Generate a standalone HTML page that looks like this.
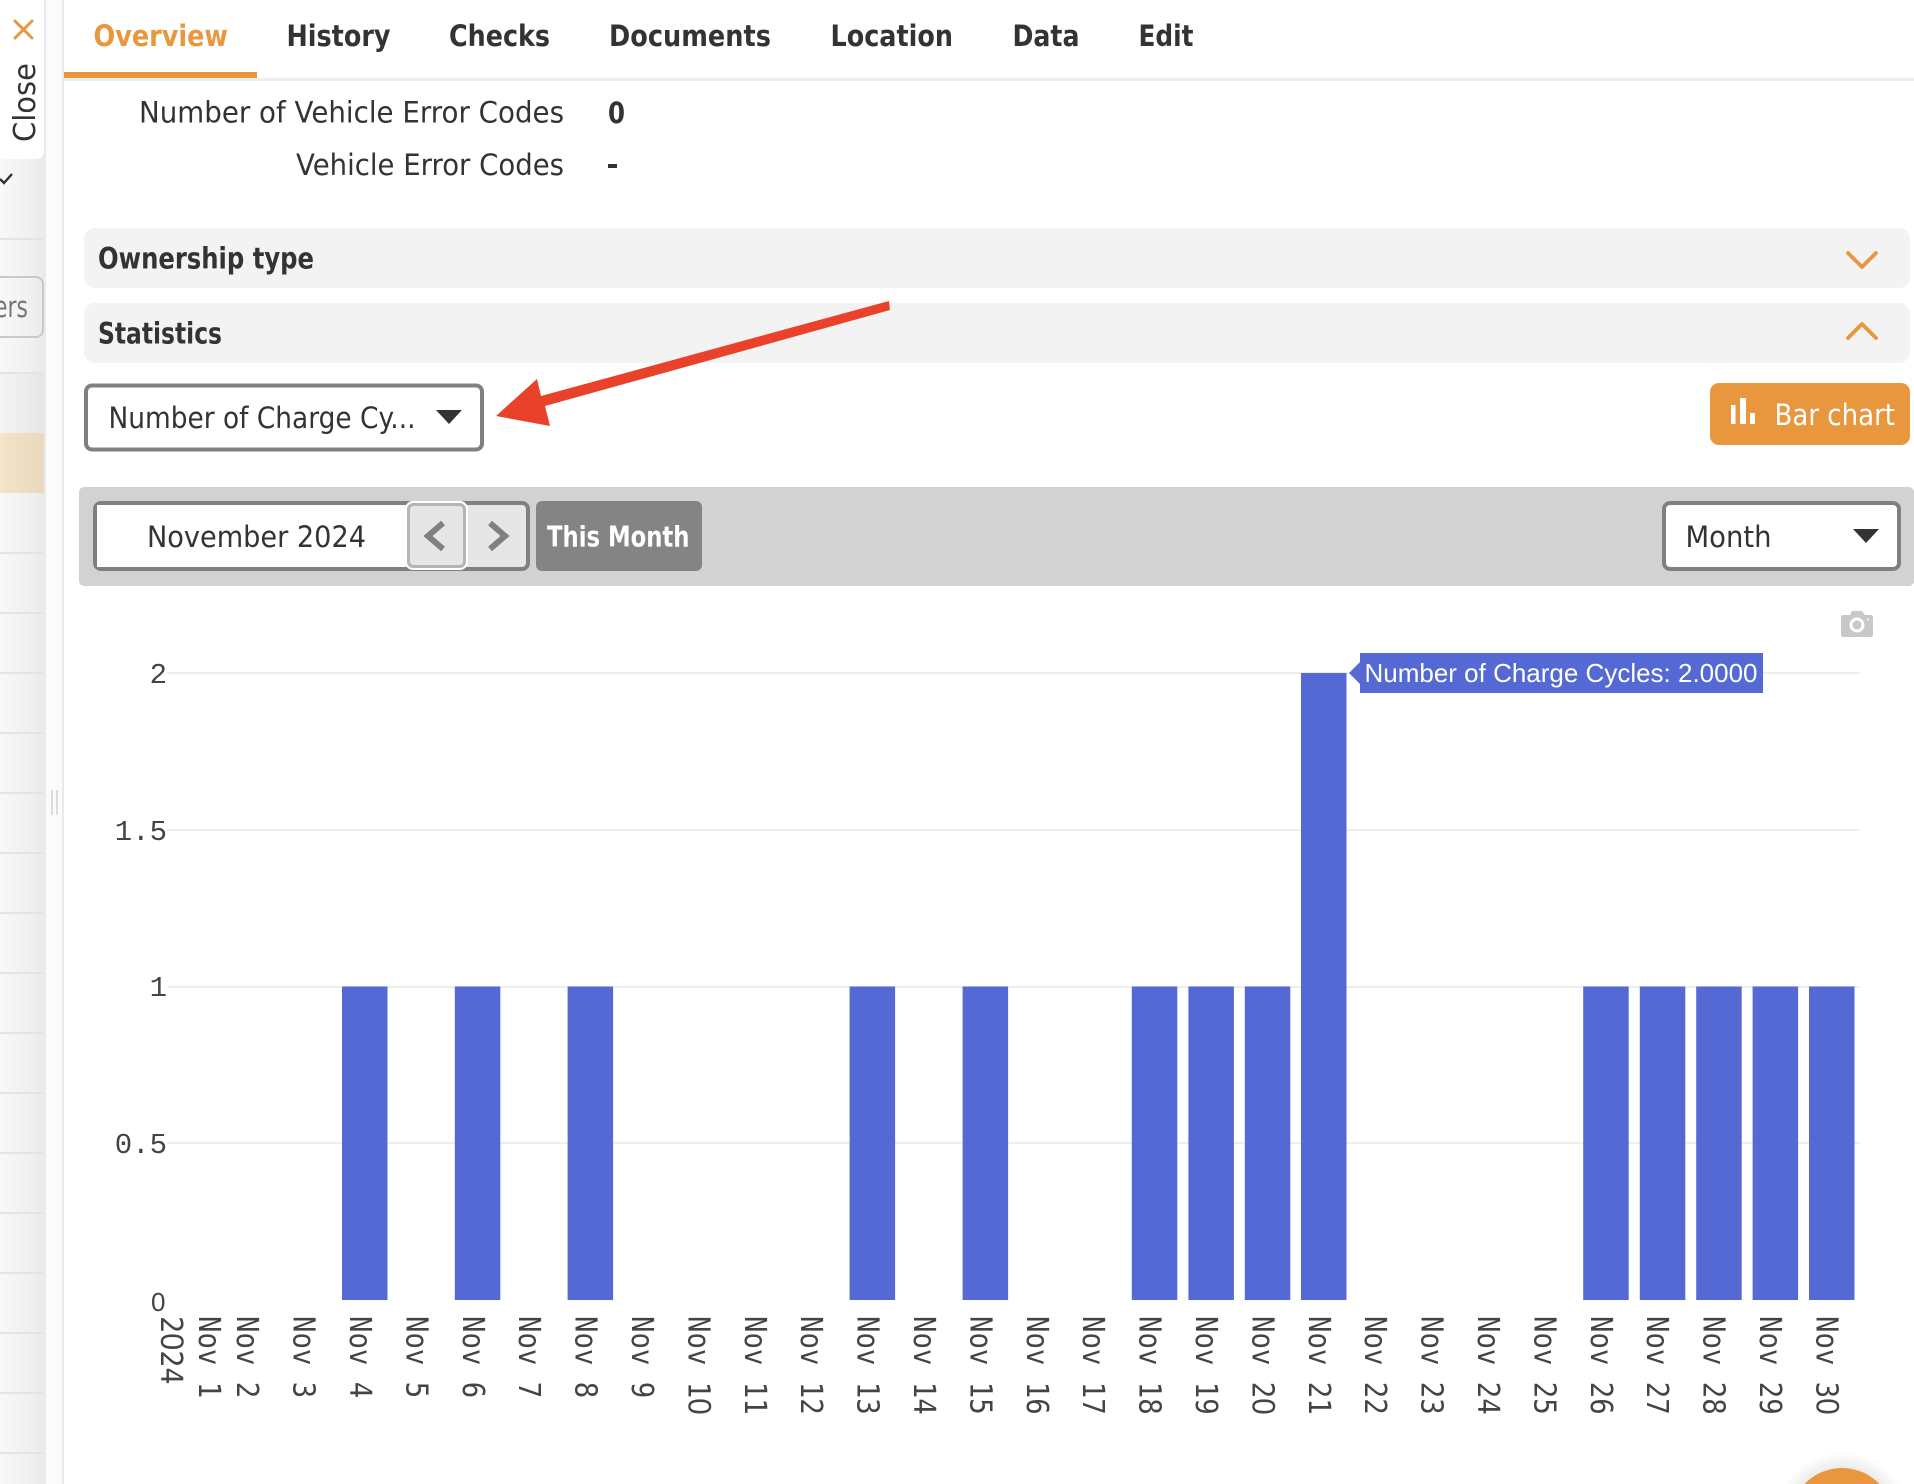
<!DOCTYPE html>
<html><head><meta charset="utf-8"><style>
html,body{margin:0;padding:0;background:#fff;width:1914px;height:1484px;overflow:hidden}
svg{display:block}
.r{font-family:"DejaVu Sans",sans-serif;font-size:29.5px;fill:#333}
.b{font-family:"DejaVu Sans",sans-serif;font-size:29.5px;font-weight:700;fill:#333}
.m{font-family:"DejaVu Sans Mono",monospace;font-size:26.4px;fill:#444}
.m tspan{font-family:"Liberation Sans",sans-serif;font-size:28.5px}
.y{font-family:"Liberation Mono",monospace;font-size:29px;fill:#444}
.s{font-family:"Liberation Sans",sans-serif}
</style></head><body>
<svg width="1914" height="1484" viewBox="0 0 1914 1484" xmlns="http://www.w3.org/2000/svg">
<defs><linearGradient id="sb" x1="0" x2="1" y1="0" y2="0"><stop offset="0" stop-color="#f8f8f8"/><stop offset="0.6" stop-color="#f1f1f1"/><stop offset="1" stop-color="#e9e9e9"/></linearGradient>
<linearGradient id="hl" x1="0" x2="1" y1="0" y2="0"><stop offset="0" stop-color="#f3e4ca"/><stop offset="1" stop-color="#e8d9bd"/></linearGradient>
<linearGradient id="bd" x1="0" x2="1" y1="0" y2="0"><stop offset="0" stop-color="#f4f4f4"/><stop offset="1" stop-color="#e6e6e6"/></linearGradient>
<radialGradient id="sh" gradientUnits="userSpaceOnUse" cx="1842" cy="1520" r="68"><stop offset="0.76" stop-color="#000" stop-opacity="0.08"/><stop offset="1" stop-color="#000" stop-opacity="0"/></radialGradient></defs>

<!-- sidebar -->
<rect x="0" y="0" width="46" height="1484" fill="url(#sb)"/>
<rect x="46" y="0" width="16" height="1484" fill="#fbfbfb"/>
<rect x="62" y="0" width="2" height="1484" fill="#e9e9e9"/>
<g fill="#e4e4e4">
<rect y="238" width="44" height="2"/><rect y="372" width="44" height="2"/><rect y="552" width="44" height="2"/><rect y="612" width="44" height="2"/><rect y="672" width="44" height="2"/><rect y="732" width="44" height="2"/><rect y="792" width="44" height="2"/><rect y="852" width="44" height="2"/><rect y="912" width="44" height="2"/><rect y="972" width="44" height="2"/><rect y="1032" width="44" height="2"/><rect y="1092" width="44" height="2"/><rect y="1152" width="44" height="2"/><rect y="1212" width="44" height="2"/><rect y="1272" width="44" height="2"/><rect y="1332" width="44" height="2"/><rect y="1392" width="44" height="2"/><rect y="1452" width="44" height="2"/>
</g>
<rect x="0" y="374" width="44" height="59" fill="url(#bd)"/>
<rect x="0" y="433" width="44" height="60" fill="url(#hl)"/>
<path d="M0 0H44V151a8 8 0 0 1-8 8H0Z" fill="#fff"/>
<path d="M15 21L32 38M32 21L15 38" stroke="#e8973f" stroke-width="3" stroke-linecap="round" fill="none"/>
<text class="r" style="font-size:30px" transform="translate(35,142) rotate(-90)" textLength="79" lengthAdjust="spacingAndGlyphs">Close</text>
<path d="M0 179L4 183L12 174" stroke="#333" stroke-width="2.400" fill="none"/>
<path d="M0 277H36a7 7 0 0 1 7 7V330a7 7 0 0 1-7 7H0" stroke="#c9c9c9" stroke-width="2" fill="none"/>
<text class="r" x="-6" y="317" style="fill:#777" textLength="34" lengthAdjust="spacingAndGlyphs">ers</text>
<path d="M52 790V815M57 790V815" stroke="#dcdcdc" stroke-width="2"/>

<!-- tabs -->
<text class="b" x="93.500" y="46" style="fill:#e8973f" textLength="134.500" lengthAdjust="spacingAndGlyphs">Overview</text>
<text class="b" x="286.500" y="46" textLength="104" lengthAdjust="spacingAndGlyphs">History</text>
<text class="b" x="449" y="46" textLength="101" lengthAdjust="spacingAndGlyphs">Checks</text>
<text class="b" x="609" y="46" textLength="162" lengthAdjust="spacingAndGlyphs">Documents</text>
<text class="b" x="830.500" y="46" textLength="122.500" lengthAdjust="spacingAndGlyphs">Location</text>
<text class="b" x="1012.500" y="46" textLength="67" lengthAdjust="spacingAndGlyphs">Data</text>
<text class="b" x="1138.500" y="46" textLength="55" lengthAdjust="spacingAndGlyphs">Edit</text>
<rect x="64" y="78" width="1850" height="3" fill="#eee"/>
<rect x="64" y="72" width="193" height="6" fill="#e8973f"/>

<!-- rows -->
<text class="r" x="139" y="122.500" textLength="425" lengthAdjust="spacingAndGlyphs">Number of Vehicle Error Codes</text>
<text class="r" x="296" y="175" textLength="268" lengthAdjust="spacingAndGlyphs">Vehicle Error Codes</text>
<text class="b" x="608" y="123" textLength="17" lengthAdjust="spacingAndGlyphs">0</text>
<rect x="608" y="164" width="9" height="4" fill="#333"/>

<!-- accordions -->
<rect x="84" y="228" width="1826" height="60" rx="11" fill="#f3f3f3"/>
<rect x="84" y="303" width="1826" height="60" rx="11" fill="#f3f3f3"/>
<text class="b" x="98" y="268.500" textLength="216" lengthAdjust="spacingAndGlyphs">Ownership type</text>
<text class="b" x="98" y="343.500" textLength="124" lengthAdjust="spacingAndGlyphs">Statistics</text>
<path d="M1848 253L1862 267L1876 253" stroke="#e8973f" stroke-width="3.800" stroke-linecap="round" stroke-linejoin="round" fill="none"/>
<path d="M1848 338L1862 324L1876 338" stroke="#e8973f" stroke-width="3.800" stroke-linecap="round" stroke-linejoin="round" fill="none"/>

<!-- select 1 -->
<rect x="86" y="385.500" width="396" height="64" rx="6" fill="#fff" stroke="#808080" stroke-width="4"/>
<text class="r" x="108.500" y="428" textLength="307" lengthAdjust="spacingAndGlyphs">Number of Charge Cy...</text>
<path d="M436 410H462L449 424Z" fill="#333"/>

<!-- arrow -->
<path d="M889 301L541 396L537 379L496 416L550 426L545 406L890 310Z" fill="#e9412a"/>

<!-- bar chart btn -->
<rect x="1710" y="383" width="200" height="62" rx="9" fill="#e8973f"/>
<path d="M1731 405h4.500v19h-4.500zM1740 398h6v26h-6zM1750 413h5v11h-5z" fill="#fff"/>
<text class="r" x="1774.500" y="425" style="fill:#fff" textLength="120.500" lengthAdjust="spacingAndGlyphs">Bar chart</text>

<!-- gray bar -->
<rect x="79" y="487" width="1835" height="99" rx="5" fill="#d2d2d2"/>
<rect x="95" y="503" width="433" height="66" rx="6" fill="#e6e6e6" stroke="#808080" stroke-width="4"/>
<path d="M97 505H405V567H97Z" fill="#fff"/>
<rect x="406" y="502" width="61" height="67" rx="7" fill="#e6e6e6" stroke="#fff" stroke-width="2"/>
<rect x="408.500" y="504.500" width="56" height="62" rx="5" fill="none" stroke="#b5b5b5" stroke-width="3"/>
<path d="M443 523L428 536L443 549" stroke="#808080" stroke-width="6" fill="none"/>
<path d="M490 523L505 536L490 549" stroke="#808080" stroke-width="6" fill="none"/>
<text class="r" x="147" y="547" textLength="219" lengthAdjust="spacingAndGlyphs">November 2024</text>
<rect x="536" y="501" width="166" height="70" rx="6" fill="#848484"/>
<text class="b" x="547" y="546.500" style="fill:#fff;font-size:28.500px" textLength="142.500" lengthAdjust="spacingAndGlyphs">This Month</text>
<rect x="1664" y="503" width="235" height="66" rx="6" fill="#fff" stroke="#808080" stroke-width="4"/>
<text class="r" x="1685.500" y="547" textLength="86" lengthAdjust="spacingAndGlyphs">Month</text>
<path d="M1853 529H1879L1866 543Z" fill="#333"/>

<!-- camera -->
<path d="M1844 615H1850L1852 611H1862L1865 615H1871a2 2 0 0 1 2 2V635a2 2 0 0 1-2 2H1843a2 2 0 0 1-2-2V617a2 2 0 0 1 2-2Z" fill="#c8c8c8"/>
<circle cx="1857" cy="625" r="6" fill="#c8c8c8" stroke="#fff" stroke-width="3"/>
<circle cx="1868" cy="619.500" r="1" fill="#fff"/>

<!-- grid -->
<g fill="#eee">
<rect x="167" y="672" width="1693" height="2"/><rect x="167" y="829" width="1693" height="2"/><rect x="167" y="986" width="1693" height="2"/><rect x="167" y="1142" width="1693" height="2"/>
</g>

<!-- y ticks -->
<text class="y" x="167" y="683" text-anchor="end">2</text>
<text class="y" x="167" y="840" text-anchor="end">1.5</text>
<text class="y" x="167" y="996" text-anchor="end">1</text>
<text class="y" x="167" y="1153" text-anchor="end">0.5</text>
<text class="s" x="151" y="1311" style="font-size:26px;fill:#444">0</text>

<!-- bars -->
<g fill="#5469d4">
<rect x="342" y="986.500" width="45.500" height="313.500"/>
<rect x="454.800" y="986.500" width="45.500" height="313.500"/>
<rect x="567.600" y="986.500" width="45.500" height="313.500"/>
<rect x="849.600" y="986.500" width="45.500" height="313.500"/>
<rect x="962.600" y="986.500" width="45.500" height="313.500"/>
<rect x="1131.800" y="986.500" width="45.500" height="313.500"/>
<rect x="1188.400" y="986.500" width="45.500" height="313.500"/>
<rect x="1244.800" y="986.500" width="45.500" height="313.500"/>
<rect x="1301" y="673" width="45.500" height="627"/>
<rect x="1583.200" y="986.500" width="45.500" height="313.500"/>
<rect x="1639.800" y="986.500" width="45.500" height="313.500"/>
<rect x="1696.200" y="986.500" width="45.500" height="313.500"/>
<rect x="1752.600" y="986.500" width="45.500" height="313.500"/>
<rect x="1809" y="986.500" width="45.500" height="313.500"/>
</g>

<!-- tooltip -->
<path d="M1360 653H1763V693H1360V684L1349 673L1360 662Z" fill="#5469d4"/>
<text class="s" x="1364.500" y="682" style="font-size:25.600px;fill:#fff" textLength="393" lengthAdjust="spacingAndGlyphs">Number of Charge Cycles: 2.0000</text>

<!-- x ticks -->
<g>
<text class="m" transform="translate(161,1316) rotate(90) scale(1.080,1.140)">2<tspan>0</tspan>24</text>
<text class="m" transform="translate(199,1316) rotate(90) scale(1.035,1.140)">Nov 1</text>
<text class="m" transform="translate(237,1316) rotate(90) scale(1.035,1.140)">Nov 2</text>
<text class="m" transform="translate(293.600,1316) rotate(90) scale(1.035,1.140)">Nov 3</text>
<text class="m" transform="translate(350,1316) rotate(90) scale(1.035,1.140)">Nov 4</text>
<text class="m" transform="translate(406.400,1316) rotate(90) scale(1.035,1.140)">Nov 5</text>
<text class="m" transform="translate(462.800,1316) rotate(90) scale(1.035,1.140)">Nov 6</text>
<text class="m" transform="translate(519.200,1316) rotate(90) scale(1.035,1.140)">Nov 7</text>
<text class="m" transform="translate(575.600,1316) rotate(90) scale(1.035,1.140)">Nov 8</text>
<text class="m" transform="translate(632,1316) rotate(90) scale(1.035,1.140)">Nov 9</text>
<text class="m" transform="translate(688.400,1316) rotate(90) scale(1.035,1.140)">Nov 1<tspan>0</tspan></text>
<text class="m" transform="translate(744.800,1316) rotate(90) scale(1.035,1.140)">Nov 11</text>
<text class="m" transform="translate(801.200,1316) rotate(90) scale(1.035,1.140)">Nov 12</text>
<text class="m" transform="translate(857.600,1316) rotate(90) scale(1.035,1.140)">Nov 13</text>
<text class="m" transform="translate(914,1316) rotate(90) scale(1.035,1.140)">Nov 14</text>
<text class="m" transform="translate(970.400,1316) rotate(90) scale(1.035,1.140)">Nov 15</text>
<text class="m" transform="translate(1026.800,1316) rotate(90) scale(1.035,1.140)">Nov 16</text>
<text class="m" transform="translate(1083.200,1316) rotate(90) scale(1.035,1.140)">Nov 17</text>
<text class="m" transform="translate(1139.600,1316) rotate(90) scale(1.035,1.140)">Nov 18</text>
<text class="m" transform="translate(1196,1316) rotate(90) scale(1.035,1.140)">Nov 19</text>
<text class="m" transform="translate(1252.400,1316) rotate(90) scale(1.035,1.140)">Nov 2<tspan>0</tspan></text>
<text class="m" transform="translate(1308.800,1316) rotate(90) scale(1.035,1.140)">Nov 21</text>
<text class="m" transform="translate(1365.200,1316) rotate(90) scale(1.035,1.140)">Nov 22</text>
<text class="m" transform="translate(1421.600,1316) rotate(90) scale(1.035,1.140)">Nov 23</text>
<text class="m" transform="translate(1478,1316) rotate(90) scale(1.035,1.140)">Nov 24</text>
<text class="m" transform="translate(1534.400,1316) rotate(90) scale(1.035,1.140)">Nov 25</text>
<text class="m" transform="translate(1590.800,1316) rotate(90) scale(1.035,1.140)">Nov 26</text>
<text class="m" transform="translate(1647.200,1316) rotate(90) scale(1.035,1.140)">Nov 27</text>
<text class="m" transform="translate(1703.600,1316) rotate(90) scale(1.035,1.140)">Nov 28</text>
<text class="m" transform="translate(1760,1316) rotate(90) scale(1.035,1.140)">Nov 29</text>
<text class="m" transform="translate(1816.400,1316) rotate(90) scale(1.035,1.140)">Nov 3<tspan>0</tspan></text>
</g>

<!-- fab -->
<rect x="1770" y="1450" width="144" height="34" fill="url(#sh)"/>
<path d="M1804.500 1484A52 52 0 0 1 1879.500 1484Z" fill="#e8973f"/>
</svg>
</body></html>
